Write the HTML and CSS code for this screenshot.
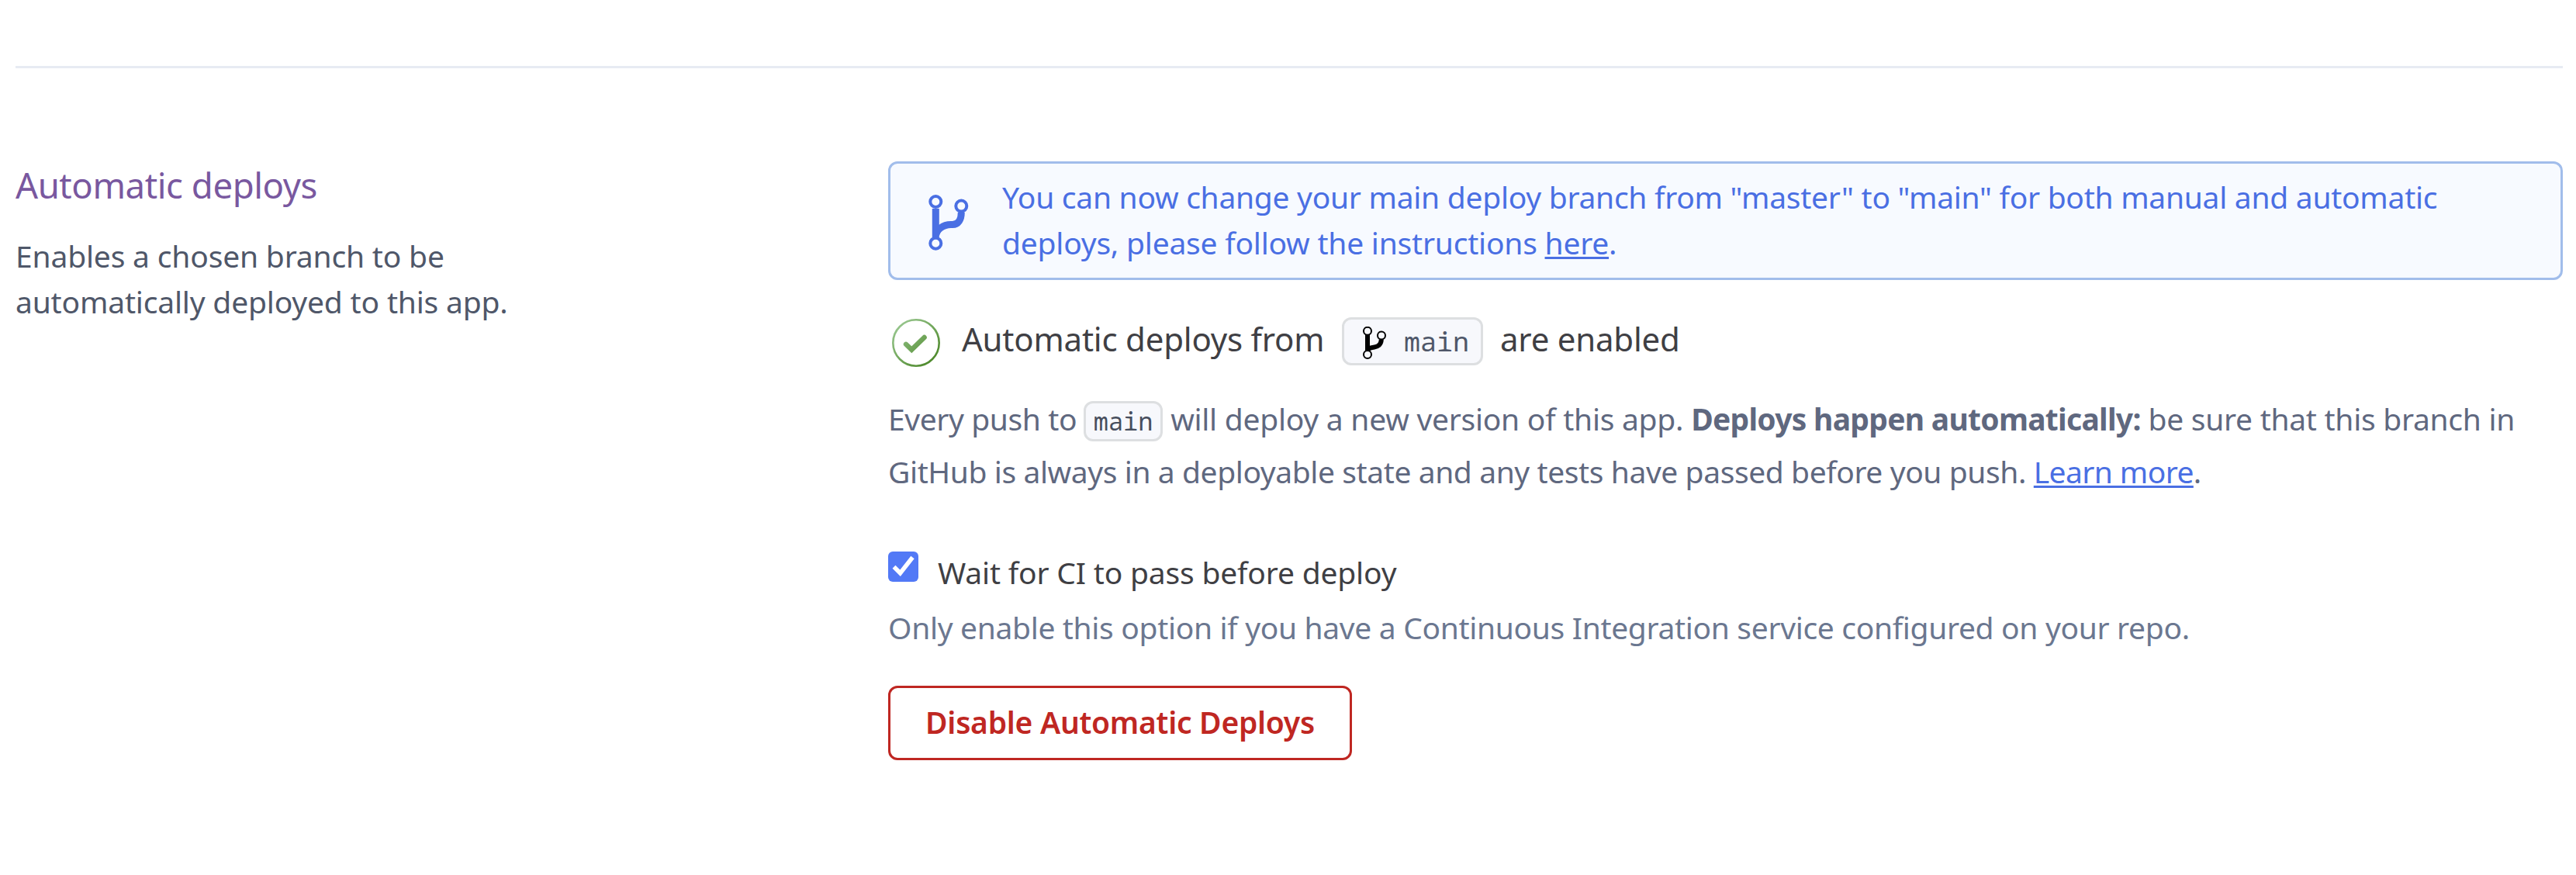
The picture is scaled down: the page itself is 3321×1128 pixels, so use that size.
FILE: index.html
```
<!DOCTYPE html>
<html lang="en">
<head>
<meta charset="utf-8">
<title>Automatic deploys</title>
<link rel="stylesheet" href="styles.css">
</head>
<body>
<section class="panel">
  <div class="intro">
    <h2 class="title">Automatic deploys</h2>
    <p class="desc">Enables a chosen branch to be<br>automatically deployed to this app.</p>
  </div>
  <div class="content">
    <div class="alert">
      <svg class="alert-icon" width="56" height="76" viewBox="0 0 56 76" fill="none" stroke="currentColor">
        <path stroke-width="9" d="M13.3 22V59M13.3 59C13.3 49 23 42.5 33 42.5H35C42.5 42.5 46.3 36 46.3 27"/>
        <g stroke-width="4" fill="#f7faff"><circle cx="13.3" cy="13" r="7"/><circle cx="46.3" cy="18.6" r="7"/><circle cx="13.3" cy="66.7" r="7"/></g>
      </svg>
      <p class="alert-text"><span class="l1">You can now change your main deploy branch from "master" to "main" for both manual and automatic</span><br><span class="l2">deploys, please follow the instructions <a href="#">here</a>.</span></p>
    </div>
    <div class="status">
      <svg class="status-icon" width="62" height="62" viewBox="0 0 62 62" fill="none">
        <defs><linearGradient id="green" gradientUnits="userSpaceOnUse" x1="8" y1="8" x2="52" y2="54"><stop stop-color="#96c58c"/><stop offset="1" stop-color="#4f8a2d"/></linearGradient></defs>
        <circle cx="31" cy="31" r="29.7" stroke="url(#green)" stroke-width="2.6"/>
        <path d="M18 32.8L25.3 39.8L41.6 24" stroke="url(#green)" stroke-width="6.4" stroke-linecap="round"/>
      </svg>
      <span class="status-text">Automatic deploys from</span>
      <span class="branch">
        <svg width="30" height="42" viewBox="0 0 30 42" fill="none" stroke="#000">
          <path stroke-width="6" d="M6 11V31M6 32C6 28 11 26.8 15 26.4C20.500 26 23.800 22 23.800 16.500"/>
          <g stroke-width="2" fill="#f7f8fc"><circle cx="6" cy="5.800" r="5"/><circle cx="24" cy="11.500" r="5"/><circle cx="6" cy="36" r="5"/></g>
        </svg>
        <span>main</span>
      </span>
      <span class="status-text end">are enabled</span>
    </div>
    <p class="info"><span class="push">Every push to</span><code class="code">main</code><span class="will">will deploy a new version of this app. </span><strong>Deploys happen automatically:</strong><span class="sure"> be sure that this branch in</span><br><span class="hub">GitHub is always in a deployable state and any tests have passed before you push. </span><a class="learn" href="#">Learn more</a>.</p>
    <label class="option">
      <svg class="box" width="39" height="39" viewBox="0 0 39 39"><rect width="39" height="39" rx="6" fill="#5279f6"/><path d="M7.500 19.800L15.600 27.800L31.500 7.500" fill="none" stroke="#fff" stroke-width="5.500"/></svg>
      <span>Wait for CI to pass before deploy</span>
    </label>
    <p class="hint">Only enable this option if you have a Continuous Integration service configured on your repo.</p>
    <button class="disable" type="button">Disable Automatic Deploys</button>
  </div>
</section>
</body>
</html>
```
FILE: styles.css
```
* { box-sizing: border-box; }
body {
  margin: 0;
  background: #fff;
  font-family: "Noto Sans", sans-serif;
  font-size: 39px;
  line-height: 59px;
}
h2, p { margin: 0; font-weight: 400; }
a { color: #4a6fe3; text-decoration: underline; text-decoration-thickness: 3px; text-underline-offset: 3px; }
.panel {
  display: grid;
  grid-template-columns: 1125px 2159px;
  margin: 85px 17px 0 20px;
  padding-top: 120px;
  border-top: 3px solid #e7ebf3;
  white-space: nowrap;
}
.title { font-size: 45.5px; line-height: 60px; letter-spacing: -0.42px; color: #79589f; }
.desc { margin-top: 32px; letter-spacing: -0.18px; color: #4f5769; }
.alert {
  display: flex;
  height: 153px;
  padding: 13px 0 16px 45px;
  border: 3px solid #a1bdeb;
  border-radius: 12px;
  background: #f7faff;
  color: #4a6fe3;
}
.alert-icon { margin-top: 23px; }
.alert-text { margin-left: 43px; }
.l1 { letter-spacing: -0.28px; }
.l2 { letter-spacing: -0.22px; }
.status { display: flex; align-items: flex-start; margin-top: 48px; height: 62px; }
.status-icon { margin: 2px 0 0 5px; flex: none; }
.status-text { margin-left: 28px; width: 490px; font-size: 42px; line-height: 56px; letter-spacing: -0.22px; color: #3f3f44; }
.status-text.end { margin-left: 22px; width: auto; }
.branch {
  display: flex;
  width: 182px;
  height: 62px;
  padding-left: 24px;
  gap: 23px;
  border: 3px solid #dddfe1;
  border-radius: 12px;
  background: #f7f8fc;
  font: 35px/56px "Noto Sans Mono", monospace;
  color: #4f5769;
}
.branch svg { margin-top: 9px; flex: none; }
.info { margin-top: 35px; line-height: 68px; color: #5f687f; }
.push { letter-spacing: -0.4px; }
.code {
  display: inline-block;
  width: 102px;
  height: 52px;
  margin: 0 10px 0 9px;
  border: 3px solid #dddfe1;
  border-radius: 12px;
  background: #f7f8fc;
  font: 32px/46px "Noto Sans Mono", monospace;
  text-align: center;
  color: #474e5d;
}
.will { letter-spacing: -0.26px; }
.info strong { font-weight: 700; letter-spacing: -0.72px; }
.sure { letter-spacing: -0.28px; }
.hub { letter-spacing: -0.41px; }
.learn { letter-spacing: -0.6px; }
.option { display: flex; align-items: flex-start; gap: 25px; margin-top: 66px; letter-spacing: -0.18px; color: #3f3f44; }
.box { margin-top: 3px; flex: none; }
.hint { margin-top: 12px; letter-spacing: -0.33px; color: #6b7790; }
.disable {
  display: block;
  width: 598px;
  height: 96px;
  margin-top: 46px;
  padding: 0 0 2px;
  border: 3px solid #bf2722;
  border-radius: 12px;
  background: #fff;
  font: 600 39px/88px "Noto Sans", sans-serif;
  letter-spacing: -0.27px;
  color: #bf2722;
}
```
